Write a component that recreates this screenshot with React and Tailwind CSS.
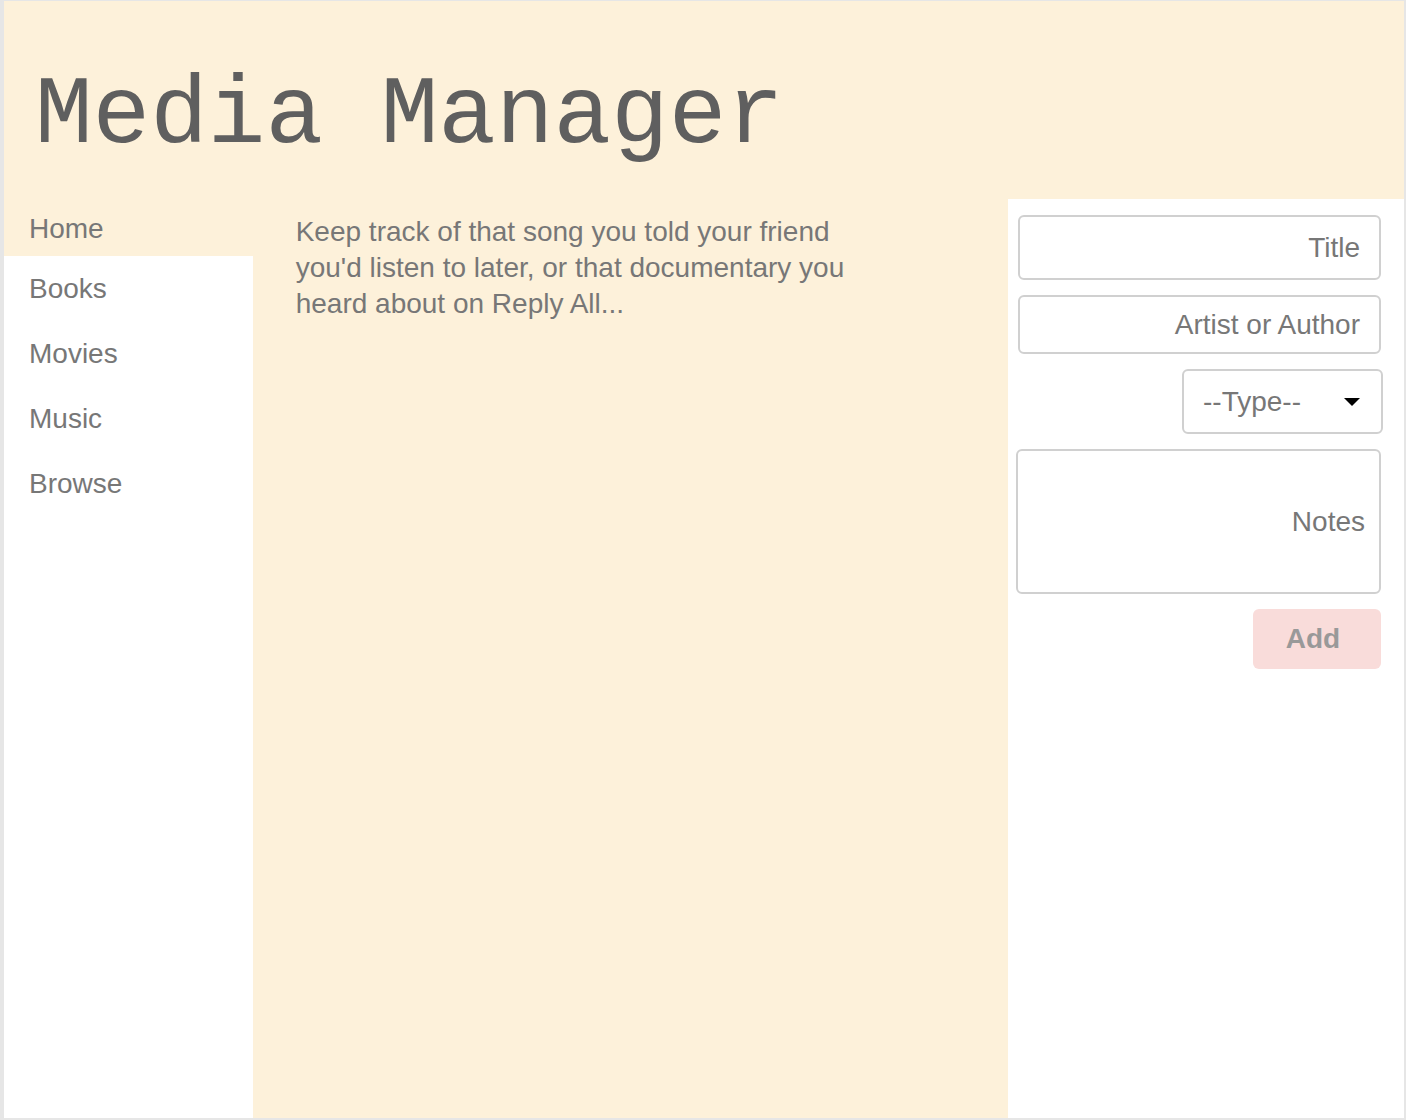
export default function App() {
  const nav = [
    { label: "Home", active: true },
    { label: "Books" },
    { label: "Movies" },
    { label: "Music" },
    { label: "Browse" },
  ];
  const sans = { fontFamily: '"Liberation Sans", Arial, sans-serif' };
  return (
    <div className="h-[1120px] w-[1406px] bg-[#e6e6e6] pl-[4px] pt-[1px] pr-[2px] pb-[2px] flex flex-col" style={sans}>
      <div className="flex flex-col flex-1 bg-white">
        <header className="h-[198px] bg-[#fdf1da] flex items-center pl-[31px] pt-[34px]">
          <h1
            className="text-[96px] leading-none text-[#5f5f5f]"
            style={{ fontFamily: '"Liberation Mono", "Courier New", monospace' }}
          >
            Media Manager
          </h1>
        </header>
        <div className="flex flex-1">
          <nav className="w-[249px] bg-white flex flex-col">
            {nav.map((n) => (
              <a
                key={n.label}
                className={`block pl-[25px] text-[28px] leading-[32px] text-[#777] ${
                  n.active ? "bg-[#fdf1da] h-[57px] pt-[14px]" : "h-[65px] pt-[17px]"
                }`}
              >
                {n.label}
              </a>
            ))}
          </nav>
          <main className="w-[756px] bg-[#fdf1da] pl-[43px] pt-[15px] pr-[150px]">
            <p className="text-[28px] leading-[36px] text-[#777] max-w-[560px]">
              Keep track of that song you told your friend you'd listen to later, or that documentary you heard about on Reply All...
            </p>
          </main>
          <aside className="flex-1 bg-white pt-[16px] pr-[23px] pl-[8px] flex flex-col items-end">
            <div className="w-[363px] h-[65px] border-2 border-[#d0d0d0] rounded-[6px] flex items-center justify-end pr-[19px] text-[28px] text-[#777]">
              Title
            </div>
            <div className="mt-[15px] w-[363px] h-[59px] border-2 border-[#d0d0d0] rounded-[6px] flex items-center justify-end pr-[19px] text-[28px] text-[#777]">
              Artist or Author
            </div>
            <div className="mt-[15px] mr-[-2px] w-[201px] h-[65px] border-2 border-[#d0d0d0] rounded-[6px] flex items-center justify-between pl-[19px] pr-[21px] text-[28px] text-[#777]">
              <span>--Type--</span>
              <svg width="16" height="8" viewBox="0 0 16 8">
                <path d="M0 0 L16 0 L8 8 Z" fill="#000" />
              </svg>
            </div>
            <div className="mt-[15px] w-[365px] h-[145px] border-2 border-[#d0d0d0] rounded-[6px] flex items-center justify-end pr-[14px] text-[28px] text-[#777]">
              Notes
            </div>
            <button className="mt-[15px] w-[128px] h-[60px] rounded-[6px] bg-[#f9dcda] text-[28px] font-bold text-[#999] pr-[8px]">
              Add
            </button>
          </aside>
        </div>
      </div>
    </div>
  );
}
